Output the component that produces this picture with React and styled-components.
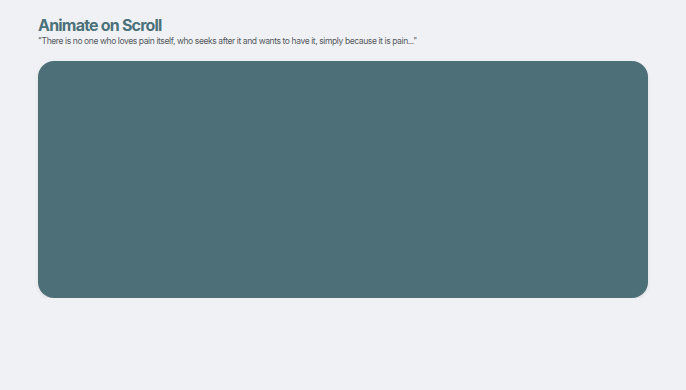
import React from "react";
import styled, { createGlobalStyle } from "styled-components";

const Global = createGlobalStyle`
  html, body { margin: 0; padding: 0; background: #f0f1f5; }
  body { font-family: Inter, "Noto Sans", sans-serif; }
`;

const Page = styled.main`
  padding: 15px 38px 0;
  display: flex;
  flex-direction: column;
`;

const Title = styled.h1`
  margin: 0;
  font-size: 16px;
  line-height: 20px;
  font-weight: 700;
  color: #4b717a;
  letter-spacing: -0.8px;
`;

const Quote = styled.p`
  margin: 0;
  font-size: 8.5px;
  line-height: 12px;
  color: #555a60;
  letter-spacing: -0.4px;
`;

const Card = styled.section`
  margin-top: 14px;
  height: 237px;
  border-radius: 16px;
  background: #4d6f77;
  box-shadow: 0 2px 4px rgba(0, 0, 0, 0.08);
`;

export default function App() {
  return (
    <>
      <Global />
      <Page>
        <Title>Animate on Scroll</Title>
        <Quote>
          "There is no one who loves pain itself, who seeks after it and wants to have it, simply because it is pain..."
        </Quote>
        <Card />
      </Page>
    </>
  );
}
